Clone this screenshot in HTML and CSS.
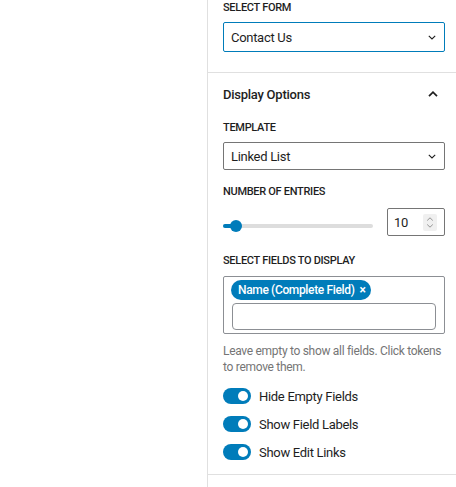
FILE: index.html
```html
<!DOCTYPE html>
<html lang="en">
<head>
<meta charset="utf-8">
<title>Block settings</title>
<link rel="stylesheet" href="styles.css">
</head>
<body>
<div class="app">
  <div class="canvas"></div>
  <aside class="sidebar">
    <div class="panel panel-top">
      <div class="ctl-label">Select Form</div>
      <div class="select is-focused">
        <span>Contact Us</span>
        <svg class="chev-down" width="8" height="5" viewBox="0 0 8 5"><polyline points="0.8,0.8 4,4 7.2,0.8" fill="none" stroke="#1e1e1e" stroke-width="1.1"/></svg>
      </div>
    </div>
    <div class="panel">
      <div class="panel-head">
        <span>Display Options</span>
        <svg class="chev-up" width="10" height="6" viewBox="0 0 10 6"><polyline points="1,5.2 5,1.2 9,5.2" fill="none" stroke="#1e1e1e" stroke-width="1.7"/></svg>
      </div>

      <div class="ctl-label">Template</div>
      <div class="select small">
        <span>Linked List</span>
        <svg class="chev-down" width="8" height="5" viewBox="0 0 8 5"><polyline points="0.8,0.8 4,4 7.2,0.8" fill="none" stroke="#1e1e1e" stroke-width="1.1"/></svg>
      </div>

      <div class="ctl-label gap-entries">Number of Entries</div>
      <div class="range-row">
        <div class="range">
          <div class="range-fill"></div>
          <div class="range-thumb"></div>
        </div>
        <div class="number">
          <span>10</span>
          <div class="spin">
            <svg width="8" height="13" viewBox="0 0 8 13"><polyline points="1.2,4.5 4,1.8 6.8,4.5" fill="none" stroke="#8a8a8a" stroke-width="0.9"/><polyline points="1.2,8.5 4,11.2 6.8,8.5" fill="none" stroke="#8a8a8a" stroke-width="0.9"/></svg>
          </div>
        </div>
      </div>

      <div class="ctl-label gap-fields">Select Fields to Display</div>
      <div class="tokens">
        <span class="token">Name (Complete Field)<span class="token-x">×</span></span>
        <div class="token-input"></div>
      </div>
      <p class="help">Leave empty to show all fields. Click tokens to remove them.</p>

      <div class="toggles">
        <div class="toggle-row"><span class="toggle"><span class="knob"></span></span><span>Hide Empty Fields</span></div>
        <div class="toggle-row"><span class="toggle"><span class="knob"></span></span><span>Show Field Labels</span></div>
        <div class="toggle-row"><span class="toggle"><span class="knob"></span></span><span>Show Edit Links</span></div>
      </div>
    </div>
  </aside>
</div>
</body>
</html>
```
FILE: styles.css
```css
* { box-sizing: border-box; }
html, body { margin: 0; padding: 0; background: #fff; }
body {
  font-family: Roboto, "Noto Sans", "Liberation Sans", sans-serif;
  color: #1e1e1e;
  font-size: 13px;
  letter-spacing: -0.3px;
}
.app { display: flex; width: 456px; height: 487px; overflow: hidden; }
.canvas { width: 207px; flex: none; }
.sidebar {
  width: 249px;
  flex: none;
  border-left: 1px solid #e0e0e0;
  height: 487px;
}
.panel {
  padding: 0 11px 12px 15px;
  border-bottom: 1px solid #e0e0e0;
}
.panel-top { padding-bottom: 20px; }
.ctl-label {
  font-size: 11px;
  font-weight: 500;
  text-transform: uppercase;
  line-height: 16px;
  margin-bottom: 6px;
  letter-spacing: -0.3px;
}
.select {
  height: 30px;
  border: 1px solid #757575;
  border-radius: 2px;
  display: flex;
  align-items: center;
  justify-content: space-between;
  padding: 0 8px 0 7px;
  font-size: 13px;
}
.select.small { height: 28px; }
.select.is-focused { border-color: #007cba; }
.chev-down { display: block; }
.panel-head {
  display: flex;
  justify-content: space-between;
  align-items: center;
  padding-top: 14px;
  line-height: 16px;
  font-weight: 500;
  margin-bottom: 17px;
  letter-spacing: -0.25px;
}
.chev-up { display: block; margin-right: 7px; margin-top: -3px; }
.gap-entries { margin-top: 14px; margin-bottom: 8px; }
.range-row { display: flex; align-items: flex-start; height: 28px; }
.range {
  position: relative;
  width: 150px;
  height: 4px;
  margin-top: 16px;
  margin-right: 14px;
  background: #dddddd;
  border-radius: 2px;
}
.range-fill {
  position: absolute;
  left: 0; top: 0;
  width: 13px; height: 4px;
  background: #007cba;
  border-radius: 2px;
}
.range-thumb {
  position: absolute;
  left: 7px; top: -4px;
  width: 12px; height: 12px;
  border-radius: 50%;
  background: #007cba;
}
.number {
  width: 58px;
  height: 28px;
  border: 1px solid #757575;
  border-radius: 2px;
  display: flex;
  align-items: center;
  justify-content: space-between;
  padding: 0 7px 0 6px;
  font-size: 13px;
}
.spin {
  width: 14px;
  height: 17px;
  background: #f0f0f0;
  border-radius: 2px;
  display: flex;
  align-items: center;
  justify-content: center;
}
.spin svg { display: block; }
.gap-fields { margin-top: 17px; margin-bottom: 7px; }
.tokens {
  border: 1px solid #8c8f94;
  border-radius: 2px;
  padding: 3px 8px 3px 7px;
}
.token {
  display: inline-flex;
  align-items: center;
  height: 20px;
  background: #007cba;
  color: #fff;
  border-radius: 10px;
  padding: 0 5px 0 7px;
  font-size: 12px;
  font-weight: 500;
  letter-spacing: -0.35px;
  vertical-align: top;
}
.token-x { margin-left: 5px; font-size: 12px; font-weight: 700; line-height: 1; }
.token-input {
  height: 27px;
  margin-top: 3px;
  margin-left: 1px;
  border: 1px solid #8c8f94;
  border-radius: 4px;
}
.help {
  margin: 9px 0 0;
  font-size: 12px;
  line-height: 16px;
  color: #757575;
  letter-spacing: -0.3px;
}
.toggles { margin-top: 11px; display: flex; flex-direction: column; gap: 8px; }
.toggle-row {
  display: flex;
  align-items: center;
  height: 20px;
  font-size: 13px;
}
.toggle {
  position: relative;
  width: 28px;
  height: 16px;
  border-radius: 8px;
  background: #007cba;
  margin-right: 8px;
  flex: none;
}
.knob {
  position: absolute;
  right: 3px; top: 3px;
  width: 10px; height: 10px;
  border-radius: 50%;
  background: #fff;
}
```
